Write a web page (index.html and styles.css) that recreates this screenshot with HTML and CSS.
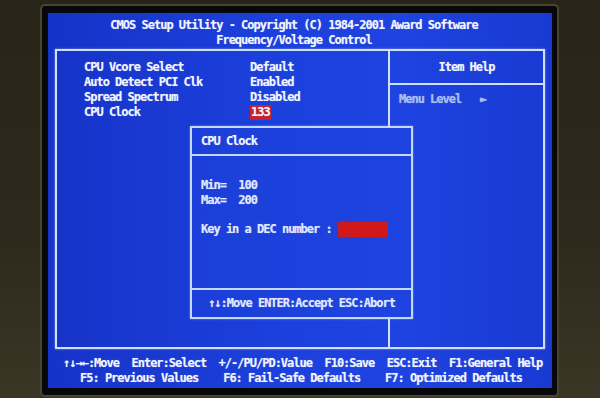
FILE: index.html
```html
<!DOCTYPE html>
<html lang="en">
<head>
  <meta charset="UTF-8" />
  <title>CMOS Setup Utility - Frequency/Voltage Control</title>
  <link rel="stylesheet" href="styles.css">
</head>
<body>

  <div class="bezel">
    <div class="tube">
      <div class="screen">

        <header class="title">
          <div>CMOS Setup Utility - Copyright (C) 1984-2001 Award Software</div>
          <div>Frequency/Voltage Control</div>
        </header>

        <div class="frame">
          <div class="items">
            <div class="row"><span class="label">CPU Vcore Select</span><span class="value">Default</span></div>
            <div class="row"><span class="label">Auto Detect PCI Clk</span><span class="value">Enabled</span></div>
            <div class="row"><span class="label">Spread Spectrum</span><span class="value">Disabled</span></div>
            <div class="row"><span class="label">CPU Clock</span><span class="value selected">133</span></div>
          </div>
          <aside class="help">
            <div class="help-head">Item Help</div>
            <div class="help-body">Menu Level   &#9658;</div>
          </aside>
        </div>

        <div class="popup">
          <div class="popup-head">CPU Clock</div>
          <div class="popup-body">
            <div>Min=  100</div>
            <div>Max=  200</div>
            <div class="entry">Key in a DEC number : <span class="input"></span></div>
          </div>
          <div class="popup-foot">&uarr;&darr;:Move ENTER:Accept ESC:Abort</div>
        </div>

        <footer class="keys">
          <div class="keys-1">&uarr;&darr;&rarr;&larr;:Move  Enter:Select  +/-/PU/PD:Value  F10:Save  ESC:Exit  F1:General Help</div>
          <div class="keys-2">F5: Previous Values    F6: Fail-Safe Defaults    F7: Optimized Defaults</div>
        </footer>

      </div>
    </div>
  </div>

</body>
</html>
```

FILE: styles.css
```css
body {
  margin: 0;
  width: 600px;
  height: 398px;
  overflow: hidden;
  background: linear-gradient(180deg, #28241a 0%, #2e291c 60%, #3b3525 100%);
}

.bezel {
  padding: 6px 0 0 42px;
}

.tube {
  width: 515px;
  height: 389px;
  box-sizing: border-box;
  padding: 7px 5px 7px 6px;
  background-color: #07080a;
  border-radius: 3px;
  box-shadow: 0 0 0 2px #4a432e;
}

.screen {
  position: relative;
  width: 504px;
  height: 375px;
  box-sizing: border-box;
  padding-top: 5px;
  background: linear-gradient(90deg, #1633c8 0%, #1c40dc 45%, #1e43e0 70%, #193ad2 100%);
  color: #f0f4ff;
  font-family: "DejaVu Sans Mono", "Liberation Mono", monospace;
  font-weight: bold;
  font-size: 12px;
  letter-spacing: -1px;
  line-height: 15px;
  text-shadow: 0 0 1px rgba(255, 255, 255, 0.45);
}

/* screen text keeps its column spacing */
.title div, .label, .value, .help-head, .help-body,
.popup-head, .popup-body div, .popup-foot, .keys div {
  white-space: pre;
}

.title {
  text-align: center;
  padding-right: 12px;
}

.frame {
  display: grid;
  grid-template-columns: 331px 1fr;
  width: 490px;
  height: 300px;
  box-sizing: border-box;
  margin: 1px 0 0 7px;
  border: 2px solid #cfe0ff;
  box-shadow: 0 0 2px rgba(200, 220, 255, 0.6);
}

.items {
  padding: 9px 0 0 27px;
}

.row {
  display: flex;
}

.label {
  width: 166px;
}

.selected {
  background-color: #c8202c;
  padding: 0 1px;
}

.help {
  border-left: 2px solid #cfe0ff;
}

.help-head {
  text-align: center;
  padding: 9px 0 8px;
  border-bottom: 2px solid #cfe0ff;
}

.help-body {
  padding: 7px 0 0 9px;
  color: #a9bdf2;
}

.popup {
  position: absolute;
  left: 142px;
  top: 113px;
  width: 223px;
  height: 193px;
  box-sizing: border-box;
  display: flex;
  flex-direction: column;
  border: 2px solid #c3d8fb;
  background: linear-gradient(90deg, #1b3fd8 0%, #1e43e0 100%);
  box-shadow: 0 0 2px rgba(200, 220, 255, 0.5);
}

.popup-head {
  padding: 6px 0 5px 9px;
  border-bottom: 2px solid #c3d8fb;
}

.popup-body {
  flex: 1;
  padding: 22px 0 0 9px;
  color: #dfe8ff;
}

.entry {
  margin-top: 14px;
}

.input {
  display: inline-block;
  vertical-align: top;
  width: 50px;
  height: 15px;
  background-color: #d01a1a;
}

.popup-foot {
  text-align: center;
  padding: 6px 0 6px;
  border-top: 2px solid #c3d8fb;
  color: #dfe8ff;
}

.keys {
  margin-top: 7px;
}

.keys-1 {
  padding-left: 15px;
}

.keys-2 {
  padding-left: 32px;
}
```
